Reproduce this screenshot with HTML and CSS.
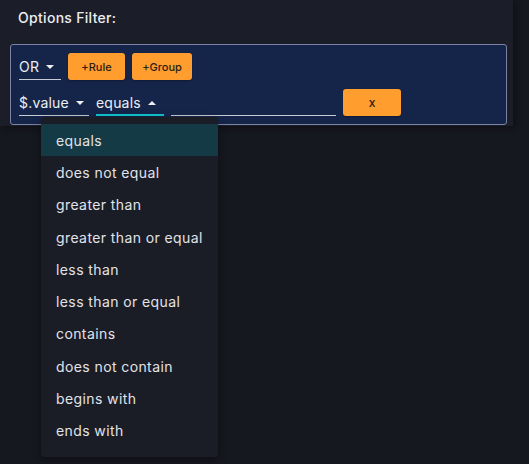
FILE: index.html
```html
<!DOCTYPE html>
<html>
<head>
<meta charset="utf-8">
<link rel="stylesheet" href="styles.css">
</head>
<body>
<div class="panel">
  <div class="title">Options Filter:</div>
  <div class="filter">
    <div class="row">
      <div class="select sel-or"><span>OR</span><i class="caret down"></i></div>
      <button class="btn btn-rule">+Rule</button>
      <button class="btn btn-group">+Group</button>
    </div>
    <div class="row">
      <div class="select sel-field"><span>$.value</span><i class="caret down"></i></div>
      <div class="select sel-op active"><span>equals</span><i class="caret up"></i></div>
      <div class="input"></div>
      <button class="btn btn-x">x</button>
    </div>
  </div>
</div>
<ul class="menu">
  <li class="selected">equals</li>
  <li>does not equal</li>
  <li>greater than</li>
  <li>greater than or equal</li>
  <li>less than</li>
  <li>less than or equal</li>
  <li>contains</li>
  <li>does not contain</li>
  <li>begins with</li>
  <li>ends with</li>
</ul>
</body>
</html>
```
FILE: styles.css
```css
* { box-sizing: border-box; }
html, body { margin: 0; padding: 0; }
body {
  background: #16181f;
  width: 529px;
  height: 464px;
  overflow: hidden;
  font-family: Inter, "Noto Sans", sans-serif;
  color: #e4e4e8;
}
.panel {
  width: 513px;
  height: 126px;
  background: #1b1e28;
  box-shadow: 2px 2px 6px rgba(0,0,0,0.35);
  padding: 0 6px 0 10px;
}
.title {
  height: 44px;
  padding: 9px 0 0 8px;
  font-size: 14px;
  font-weight: 500;
  letter-spacing: 0.3px;
  color: #ececf0;
}
.filter {
  background: #15254a;
  border: 1px solid #7c82a4;
  border-radius: 3px;
  padding: 8px;
  display: flex;
  flex-direction: column;
  gap: 9px;
}
.row {
  display: flex;
  align-items: stretch;
  gap: 7px;
  height: 27px;
}
.select {
  display: flex;
  align-items: center;
  gap: 7px;
  border-bottom: 1px solid #c9cbd4;
  font-size: 14px;
  letter-spacing: 0.2px;
  color: #eceef2;
  padding-top: 1px;
}
.select.active { border-bottom: 2px solid #14c4cc; padding-top: 2px; }
.sel-or { width: 42px; }
.sel-field { width: 70px; }
.sel-op { width: 68px; }
.caret {
  width: 0; height: 0;
  border-left: 4px solid transparent;
  border-right: 4px solid transparent;
}
.caret.down { border-top: 4px solid #eceef2; }
.caret.up { border-bottom: 4px solid #eceef2; }
.input {
  width: 165px;
  border-bottom: 1px solid #c9cbd4;
}
.btn {
  border: none;
  background: #ff9d2e;
  color: #2b2115;
  font-family: Inter, "Noto Sans", sans-serif;
  font-size: 11px;
  font-weight: 500;
  border-radius: 3px;
  padding: 0;
  box-shadow: 0 1px 2px rgba(0,0,0,0.3);
}
.btn-rule { width: 57px; }
.btn-group { width: 60px; }
.btn-x { width: 58px; font-size: 12px; }
.menu {
  position: absolute;
  left: 41px;
  top: 117px;
  width: 177px;
  margin: 0;
  padding: 7px 0 10px;
  list-style: none;
  background: #1a1d26;
  border-radius: 3px;
  box-shadow: 0 3px 8px rgba(0,0,0,0.4);
}
.menu li {
  height: 32.3px;
  display: flex;
  align-items: center;
  padding-left: 15px;
  font-size: 14px;
  letter-spacing: 0.4px;
  color: #e2e3e8;
}
.menu li.selected { background: #133a45; }
```
